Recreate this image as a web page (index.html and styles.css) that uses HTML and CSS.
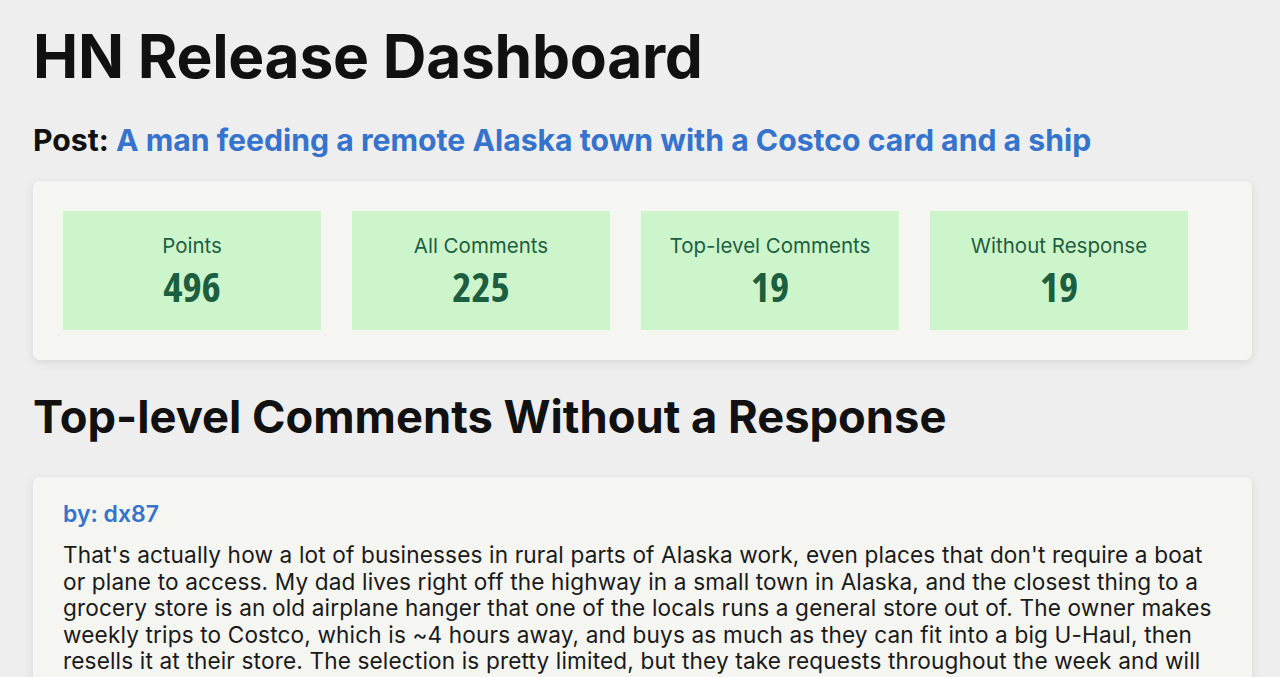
FILE: index.html
```html
<!DOCTYPE html>
<html lang="en">
<head>
<meta charset="utf-8">
<title>HN Release Dashboard</title>
<link rel="stylesheet" href="styles.css">
</head>
<body>
<main class="page">
  <h1 class="title">HN Release Dashboard</h1>
  <p class="post"><span class="post-label">Post:</span> <a class="post-link" href="#">A man feeding a remote Alaska town with a Costco card and a ship</a></p>
  <section class="stats">
    <div class="stat"><div class="stat-label">Points</div><div class="stat-value">496</div></div>
    <div class="stat"><div class="stat-label">All Comments</div><div class="stat-value">225</div></div>
    <div class="stat"><div class="stat-label">Top-level Comments</div><div class="stat-value">19</div></div>
    <div class="stat"><div class="stat-label">Without Response</div><div class="stat-value">19</div></div>
  </section>
  <h2 class="section-title">Top-level Comments Without a Response</h2>
  <article class="comment">
    <div class="comment-author">by: dx87</div>
    <p class="comment-text">That's actually how a lot of businesses in rural parts of Alaska work, even places that don't require a boat or plane to access. My dad lives right off the highway in a small town in Alaska, and the closest thing to a grocery store is an old airplane hanger that one of the locals runs a general store out of. The owner makes weekly trips to Costco, which is ~4 hours away, and buys as much as they can fit into a big U-Haul, then resells it at their store. The selection is pretty limited, but they take requests throughout the week and will try to get whatever people ask for on the next trip.</p>
  </article>
</main>
</body>
</html>
```
FILE: styles.css
```css
html, body {
  margin: 0;
  padding: 0;
}
body {
  background: #eeeeef;
  font-family: Inter, "Liberation Sans", sans-serif;
  color: #111;
}
.page {
  padding: 21px 28px 0 33px;
}
.title {
  margin: 0;
  font-size: 60.5px;
  font-weight: 700;
  line-height: 70px;
  letter-spacing: -0.3px;
}
.post {
  margin: 32px 0 0;
  font-size: 30.2px;
  font-weight: 700;
  line-height: 34px;
}
.post-link {
  color: #3573cc;
  text-decoration: none;
}
.stats {
  margin-top: 24px;
  background: #f5f5f1;
  border-radius: 7px;
  box-shadow: 0 2px 10px rgba(0,0,0,0.10);
  padding: 30px;
  display: flex;
  gap: 31px;
}
.stat {
  width: 258px;
  height: 119px;
  box-sizing: border-box;
  padding-top: 22px;
  background: #cdf5cb;
  color: #1d5e40;
  display: flex;
  flex-direction: column;
  align-items: center;
}
.stat-label {
  font-family: Inter, "Noto Sans", sans-serif;
  font-size: 20.5px;
  line-height: 26px;
}
.stat-value {
  margin-top: 2px;
  font-family: "Open Sans", "DejaVu Sans", sans-serif;
  font-stretch: 75%;
  font-weight: 700;
  font-size: 41px;
  line-height: 50px;
}
.section-title {
  margin: 27px 0 0;
  font-size: 45.3px;
  font-weight: 700;
  line-height: 60px;
}
.comment {
  margin-top: 30px;
  background: #f5f5f1;
  border-radius: 7px;
  box-shadow: 0 2px 10px rgba(0,0,0,0.10);
  padding: 22px 30px 20px;
}
.comment-author {
  color: #3573cc;
  font-size: 23px;
  font-weight: 600;
  line-height: 30px;
}
.comment-text {
  margin: 13px 0 0;
  font-size: 22.6px;
  line-height: 26.5px;
  letter-spacing: 0.15px;
  color: #1a1a1a;
}
```
